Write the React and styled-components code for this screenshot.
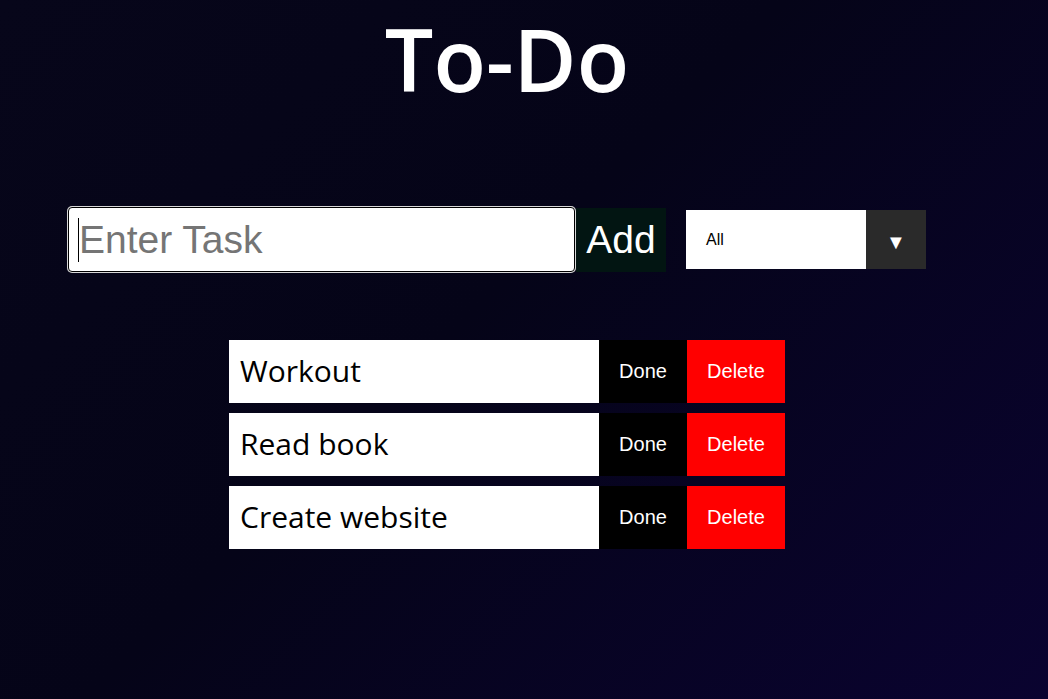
import React from "react";
import styled, { createGlobalStyle } from "styled-components";

const Global = createGlobalStyle`
  html, body { margin: 0; padding: 0; }
  body {
    min-height: 699px;
    background: linear-gradient(135deg, #07061a 0%, #050418 45%, #0a0330 100%);
    font-family: "Liberation Sans", Arial, sans-serif;
  }
`;

const Page = styled.div`
  width: 1014px;
  min-height: 699px;
  display: flex;
  flex-direction: column;
  align-items: center;
`;

const Title = styled.h1`
  margin: 0;
  font-family: "Open Sans", "Noto Sans", sans-serif;
  font-weight: 600;
  font-size: 86px;
  line-height: normal;
  color: #ffffff;
  letter-spacing: 0;
`;

const FormRow = styled.div`
  align-self: flex-start;
  margin: 89px 0 0 67px;
  display: flex;
  align-items: center;
`;

const InputWrap = styled.div`
  position: relative;
  display: flex;
`;

const TaskInput = styled.input`
  box-sizing: border-box;
  width: 507px;
  height: 65px;
  margin: 1px;
  padding: 0 10px;
  border: 1px solid #000;
  border-radius: 4px;
  box-shadow: 0 0 0 1px #d8d8d8;
  background: #fff;
  font-family: "Liberation Sans", Arial, sans-serif;
  font-size: 39px;
  color: #000;
  outline: none;
  &::placeholder { color: #757575; }
`;

const Caret = styled.span`
  position: absolute;
  left: 11px;
  top: 12px;
  width: 1px;
  height: 44px;
  background: #000;
`;

const AddButton = styled.button`
  width: 90px;
  height: 64px;
  border: none;
  padding: 0;
  background: #021512;
  color: #fff;
  font-family: "Liberation Sans", Arial, sans-serif;
  font-size: 39px;
`;

const Select = styled.div`
  margin-left: 20px;
  display: flex;
  height: 59px;
  width: 240px;
`;

const SelectValue = styled.div`
  flex: 1;
  background: #fff;
  display: flex;
  align-items: center;
  padding-left: 20px;
  font-family: "Liberation Sans", Arial, sans-serif;
  font-size: 16px;
  color: #000;
`;

const SelectArrow = styled.div`
  width: 60px;
  background: #2a2a2a;
  color: #fff;
  display: flex;
  align-items: center;
  justify-content: center;
  padding-top: 6px;
  box-sizing: border-box;
  font-size: 20px;
`;

const List = styled.ul`
  list-style: none;
  margin: 67px 0 0;
  padding: 0;
  display: flex;
  flex-direction: column;
  gap: 10px;
`;

const Row = styled.li`
  display: flex;
  height: 63px;
`;

const TaskText = styled.div`
  width: 370px;
  box-sizing: border-box;
  background: #fff;
  padding: 0 0 3px 11px;
  display: flex;
  align-items: center;
  font-family: "Open Sans", "Noto Sans", sans-serif;
  font-size: 30px;
  color: #000;
`;

const ActionButton = styled.button`
  width: ${(p) => p.$w}px;
  border: none;
  padding: 0;
  background: ${(p) => p.$bg};
  color: #fff;
  font-family: "Liberation Sans", Arial, sans-serif;
  font-size: 20px;
`;

const tasks = ["Workout", "Read book", "Create website"];

export default function App() {
  return (
    <>
      <Global />
      <Page>
        <Title>To-Do</Title>
        <FormRow>
          <InputWrap>
            <TaskInput placeholder="Enter Task" />
            <Caret />
          </InputWrap>
          <AddButton>Add</AddButton>
          <Select>
            <SelectValue>All</SelectValue>
            <SelectArrow>▼</SelectArrow>
          </Select>
        </FormRow>
        <List>
          {tasks.map((t) => (
            <Row key={t}>
              <TaskText>{t}</TaskText>
              <ActionButton $w={88} $bg="#000">Done</ActionButton>
              <ActionButton $w={98} $bg="#ff0000">Delete</ActionButton>
            </Row>
          ))}
        </List>
      </Page>
    </>
  );
}
